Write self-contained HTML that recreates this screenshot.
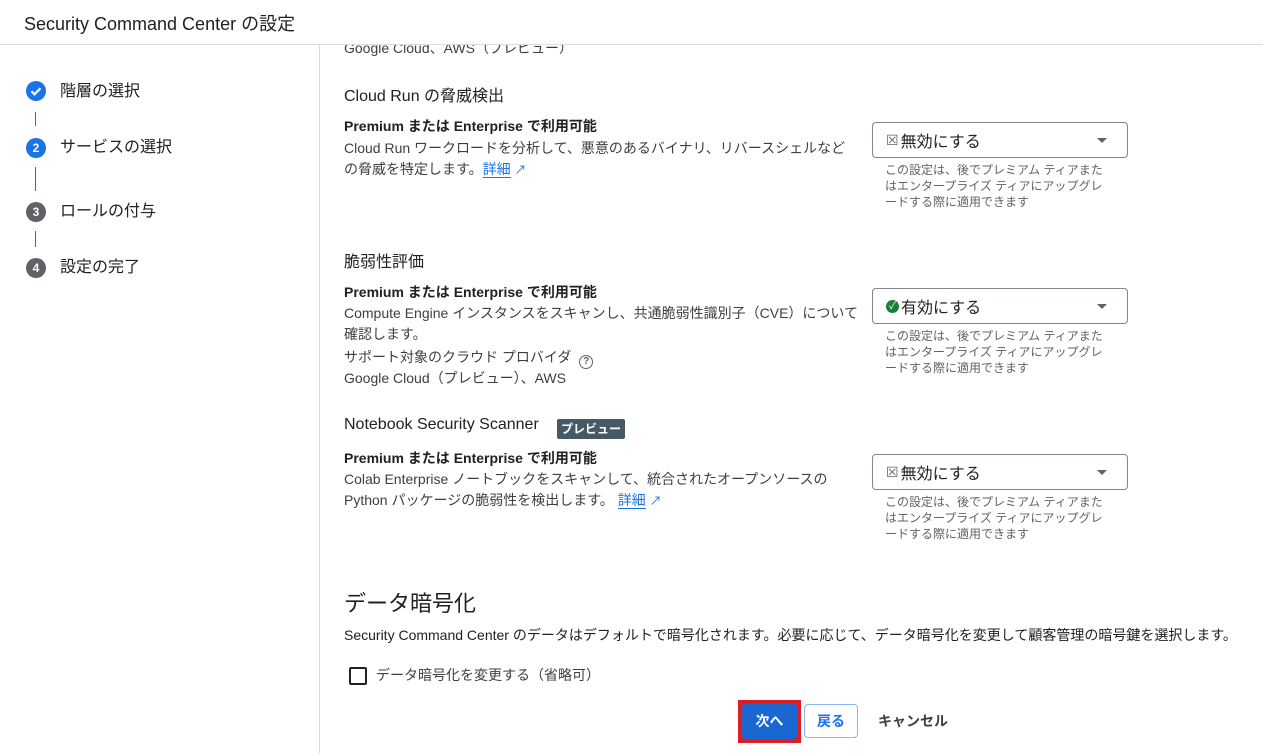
<!DOCTYPE html>
<html><head><meta charset="utf-8"><style>
*{margin:0;padding:0;box-sizing:border-box}
body{width:1263px;height:753px;overflow:hidden;background:#fff;font-family:"Liberation Sans","Noto Sans CJK JP",sans-serif;color:#202124;position:relative}
.a{position:absolute;white-space:nowrap}
.h{font-size:16px;color:#202124}
.b{font-size:14px;font-weight:bold;color:#202124}
.t{font-size:14px;color:#3c4043}
.s{font-size:12px;color:#5f6368;line-height:16px}
.sel{position:absolute;left:872px;width:256px;height:36px;border:1px solid #80868b;border-radius:4px;font-size:16px;color:#202124}
.sel .l{position:absolute;left:13px;top:0;height:34px;display:flex;align-items:center;gap:2px}
.sel .ar{position:absolute;right:20px;top:15px;width:0;height:0;border-left:5px solid transparent;border-right:5px solid transparent;border-top:5px solid #5f6368}
.lk{color:#1a73e8;border-bottom:1px solid #1a73e8}
.step{position:absolute;left:26px;width:20px;height:20px;border-radius:50%;color:#fff;font-size:12px;font-weight:bold;text-align:center;line-height:20px}
.vl{position:absolute;left:35px;width:1px;background:#5f6368}
</style></head><body>
<div class="a t" style="left:344px;top:38px">Google Cloud、AWS（プレビュー）</div>
<div class="a" style="left:0;top:0;width:1263px;height:45px;background:#fff;border-bottom:1px solid #dadce0"></div>
<div class="a" style="left:24px;top:10px;font-size:18px;color:#202124">Security Command Center の設定</div>
<div class="a" style="left:319px;top:45px;width:1px;height:708px;background:#dadce0"></div>

<div class="step" style="top:81px;background:#1a73e8"><svg width="20" height="20" viewBox="0 0 20 20"><path d="M5.5 10.3l3 3 6-6" stroke="#fff" stroke-width="2.2" fill="none"/></svg></div>
<div class="a" style="left:60px;top:77px;font-size:16px">階層の選択</div>
<div class="vl" style="top:112px;height:14px"></div>
<div class="step" style="top:138px;background:#1a73e8">2</div>
<div class="a" style="left:60px;top:133px;font-size:16px">サービスの選択</div>
<div class="vl" style="top:167px;height:24px"></div>
<div class="step" style="top:202px;background:#5f6368">3</div>
<div class="a" style="left:60px;top:197px;font-size:16px">ロールの付与</div>
<div class="vl" style="top:231px;height:16px"></div>
<div class="step" style="top:258px;background:#5f6368">4</div>
<div class="a" style="left:60px;top:253px;font-size:16px">設定の完了</div>

<div class="a h" style="left:344px;top:82px">Cloud Run の脅威検出</div>
<div class="a b" style="left:344px;top:116px">Premium または Enterprise で利用可能</div>
<div class="a t" style="left:344px;top:138px;line-height:21px">Cloud Run ワークロードを分析して、悪意のあるバイナリ、リバースシェルなど<br>の脅威を特定します。<span class="lk">詳細</span> <span style="color:#1a73e8;font-size:12px">↗</span></div>
<div class="sel" style="top:122px"><span class="l"><span style="font-size:14px;color:#5f6368">☒</span>無効にする</span><span class="ar"></span></div>
<div class="a s" style="left:885px;top:162px">この設定は、後でプレミアム ティアまた<br>はエンタープライズ ティアにアップグレ<br>ードする際に適用できます</div>

<div class="a h" style="left:344px;top:248px">脆弱性評価</div>
<div class="a b" style="left:344px;top:282px">Premium または Enterprise で利用可能</div>
<div class="a t" style="left:344px;top:303px;line-height:21px">Compute Engine インスタンスをスキャンし、共通脆弱性識別子（CVE）について<br>確認します。</div>
<div class="a t" style="left:344px;top:347px">サポート対象のクラウド プロバイダ <span style="display:inline-block;width:14px;height:14px;border:1.5px solid #5f6368;border-radius:50%;font-size:10px;text-align:center;line-height:11px;font-weight:bold;color:#5f6368;vertical-align:-2px;margin-left:4px">?</span></div>
<div class="a t" style="left:344px;top:368px">Google Cloud（プレビュー）、AWS</div>
<div class="sel" style="top:288px"><span class="l"><span style="display:inline-block;width:13px;height:13px;border-radius:50%;background:#188038;color:#fff;font-size:10px;text-align:center;line-height:13px">✓</span>有効にする</span><span class="ar"></span></div>
<div class="a s" style="left:885px;top:328px">この設定は、後でプレミアム ティアまた<br>はエンタープライズ ティアにアップグレ<br>ードする際に適用できます</div>

<div class="a h" style="left:344px;top:416px">Notebook Security Scanner</div>
<div class="a" style="left:557px;top:419px;width:68px;height:20px;background:#455a64;border-radius:2px;color:#fff;font-size:12px;font-weight:bold;text-align:center;line-height:20px">プレビュー</div>
<div class="a b" style="left:344px;top:448px">Premium または Enterprise で利用可能</div>
<div class="a t" style="left:344px;top:469px;line-height:21px">Colab Enterprise ノートブックをスキャンして、統合されたオープンソースの<br>Python パッケージの脆弱性を検出します。 <span class="lk">詳細</span> <span style="color:#1a73e8;font-size:12px">↗</span></div>
<div class="sel" style="top:454px"><span class="l"><span style="font-size:14px;color:#5f6368">☒</span>無効にする</span><span class="ar"></span></div>
<div class="a s" style="left:885px;top:494px">この設定は、後でプレミアム ティアまた<br>はエンタープライズ ティアにアップグレ<br>ードする際に適用できます</div>

<div class="a" style="left:344px;top:586px;font-size:22px;color:#202124">データ暗号化</div>
<div class="a t" style="left:344px;top:625px;color:#202124">Security Command Center のデータはデフォルトで暗号化されます。必要に応じて、データ暗号化を変更して顧客管理の暗号鍵を選択します。</div>
<div class="a" style="left:349px;top:667px;width:18px;height:18px;border:2px solid #202124;border-radius:2px"></div>
<div class="a t" style="left:376px;top:665px">データ暗号化を変更する（省略可）</div>

<div class="a" style="left:738px;top:700px;width:63px;height:43px;background:#e01b22"></div>
<div class="a" style="left:742px;top:704px;width:55px;height:35px;background:#1a67d2;border-radius:3px;color:#fff;font-size:14px;font-weight:bold;text-align:center;line-height:35px">次へ</div>
<div class="a" style="left:804px;top:704px;width:54px;height:34px;border:1px solid #8ab4f8;border-radius:4px;color:#1a73e8;font-size:14px;font-weight:bold;text-align:center;line-height:32px">戻る</div>
<div class="a" style="left:878px;top:711px;font-size:14px;font-weight:bold;color:#3c4043">キャンセル</div>
</body></html>
